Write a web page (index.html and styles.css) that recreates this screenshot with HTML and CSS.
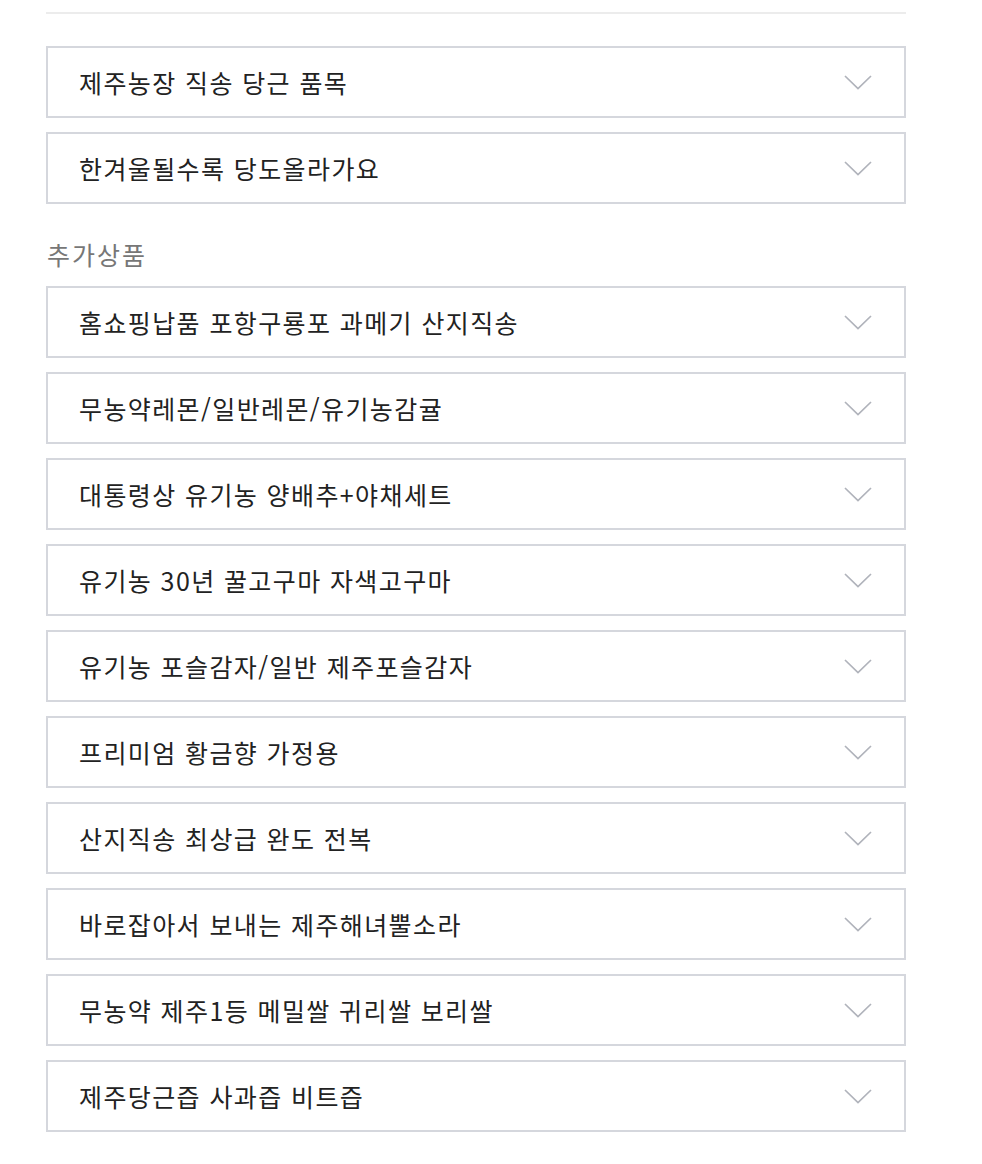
FILE: index.html
```html
<!DOCTYPE html>
<html lang="ko">
<head>
<meta charset="utf-8">
<title>상품 선택</title>
<link rel="stylesheet" href="styles.css">
</head>
<body>
<div class="page">
  <div class="divider"></div>
  <div class="list">
    <div class="select"><span class="label">제주농장 직송 당근 품목</span><svg class="chev" width="28" height="15" viewBox="0 0 28 15"><polyline points="1,1 14,13.5 27,1" fill="none" stroke="#b0b3bb" stroke-width="1.7"/></svg></div>
    <div class="select"><span class="label">한겨울될수록 당도올라가요</span><svg class="chev" width="28" height="15" viewBox="0 0 28 15"><polyline points="1,1 14,13.5 27,1" fill="none" stroke="#b0b3bb" stroke-width="1.7"/></svg></div>
  </div>
  <div class="section-title">추가상품</div>
  <div class="list">
    <div class="select"><span class="label">홈쇼핑납품 포항구룡포 과메기 산지직송</span><svg class="chev" width="28" height="15" viewBox="0 0 28 15"><polyline points="1,1 14,13.5 27,1" fill="none" stroke="#b0b3bb" stroke-width="1.7"/></svg></div>
    <div class="select"><span class="label">무농약레몬/일반레몬/유기농감귤</span><svg class="chev" width="28" height="15" viewBox="0 0 28 15"><polyline points="1,1 14,13.5 27,1" fill="none" stroke="#b0b3bb" stroke-width="1.7"/></svg></div>
    <div class="select"><span class="label">대통령상 유기농 양배추+야채세트</span><svg class="chev" width="28" height="15" viewBox="0 0 28 15"><polyline points="1,1 14,13.5 27,1" fill="none" stroke="#b0b3bb" stroke-width="1.7"/></svg></div>
    <div class="select"><span class="label">유기농 30년 꿀고구마 자색고구마</span><svg class="chev" width="28" height="15" viewBox="0 0 28 15"><polyline points="1,1 14,13.5 27,1" fill="none" stroke="#b0b3bb" stroke-width="1.7"/></svg></div>
    <div class="select"><span class="label">유기농 포슬감자/일반 제주포슬감자</span><svg class="chev" width="28" height="15" viewBox="0 0 28 15"><polyline points="1,1 14,13.5 27,1" fill="none" stroke="#b0b3bb" stroke-width="1.7"/></svg></div>
    <div class="select"><span class="label">프리미엄 황금향 가정용</span><svg class="chev" width="28" height="15" viewBox="0 0 28 15"><polyline points="1,1 14,13.5 27,1" fill="none" stroke="#b0b3bb" stroke-width="1.7"/></svg></div>
    <div class="select"><span class="label">산지직송 최상급 완도 전복</span><svg class="chev" width="28" height="15" viewBox="0 0 28 15"><polyline points="1,1 14,13.5 27,1" fill="none" stroke="#b0b3bb" stroke-width="1.7"/></svg></div>
    <div class="select"><span class="label">바로잡아서 보내는 제주해녀뿔소라</span><svg class="chev" width="28" height="15" viewBox="0 0 28 15"><polyline points="1,1 14,13.5 27,1" fill="none" stroke="#b0b3bb" stroke-width="1.7"/></svg></div>
    <div class="select"><span class="label">무농약 제주1등 메밀쌀 귀리쌀 보리쌀</span><svg class="chev" width="28" height="15" viewBox="0 0 28 15"><polyline points="1,1 14,13.5 27,1" fill="none" stroke="#b0b3bb" stroke-width="1.7"/></svg></div>
    <div class="select"><span class="label">제주당근즙 사과즙 비트즙</span><svg class="chev" width="28" height="15" viewBox="0 0 28 15"><polyline points="1,1 14,13.5 27,1" fill="none" stroke="#b0b3bb" stroke-width="1.7"/></svg></div>
  </div>
</div>
</body>
</html>
```
FILE: styles.css
```css
html, body {
  margin: 0;
  padding: 0;
  background: #ffffff;
}
body {
  font-family: "Noto Sans CJK KR", "Noto Sans", sans-serif;
  color: #222222;
}
.page {
  width: 860px;
  padding: 12px 0 0 46px;
}
.divider {
  height: 2px;
  background: #ececec;
  margin-bottom: 32px;
}
.list {
  display: flex;
  flex-direction: column;
  gap: 14px;
}
.select {
  box-sizing: border-box;
  height: 72px;
  border: 2px solid #d5d7dd;
  display: flex;
  align-items: center;
  justify-content: space-between;
  padding: 0 32px 0 31px;
}
.label {
  font-size: 25px;
  line-height: 1;
  color: #222222;
  letter-spacing: 1.4px;
  font-weight: 400;
}
.chev {
  display: block;
  flex: none;
}
.section-title {
  font-size: 25px;
  line-height: 30px;
  color: #777777;
  letter-spacing: 2px;
  margin: 35px 0 17px 1px;
}
```
